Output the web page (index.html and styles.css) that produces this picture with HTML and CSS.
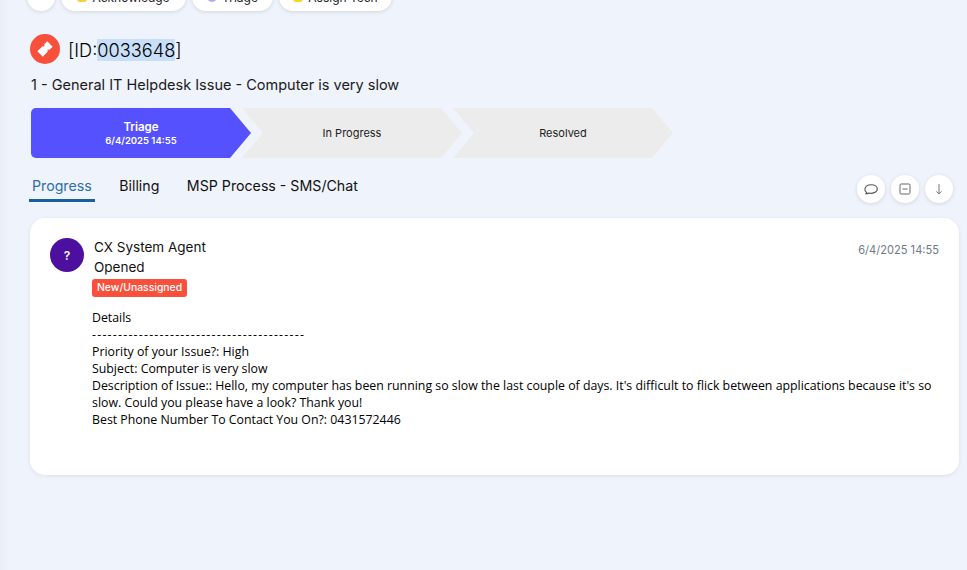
FILE: index.html
```html
<!DOCTYPE html>
<html lang="en">
<head>
  <meta charset="UTF-8" />
  <title>Ticket 0033648</title>
  <link rel="stylesheet" href="styles.css">
</head>
<body>
  <div class="toolbar">
    <button class="tool-round">
      <svg width="12" height="12" viewBox="0 0 12 12"><path d="M2 6h8M6 2v8" stroke="#666" fill="none"/></svg>
    </button>
    <button class="tool-pill pill-ack"><span class="dot dot-yellow"></span>Acknowledge</button>
    <button class="tool-pill pill-triage"><span class="dot dot-purple"></span>Triage</button>
    <button class="tool-pill pill-assign"><span class="dot dot-gold"></span>Assign Tech</button>
  </div>

  <div class="ticket-head">
    <span class="ticket-icon">
      <svg width="18" height="18" viewBox="0 0 18 18"><path transform="rotate(-45 9 9)" d="M2 5.200h7.200a1.200 1.200 0 0 0 2.400 0H16v7.600h-4.400a1.200 1.200 0 0 0-2.400 0H2z" fill="#fff"/></svg>
    </span>
    <h1 class="ticket-id">[ID:<span class="selected">0033648</span>]</h1>
  </div>
  <p class="ticket-title">1 - General IT Helpdesk Issue - Computer is very slow</p>

  <div class="stages">
    <div class="stage stage-first stage-active">
      <strong>Triage</strong>
      <small>6/4/2025 14:55</small>
    </div>
    <div class="stage">In Progress</div>
    <div class="stage">Resolved</div>
  </div>

  <div class="tabs-row">
    <nav class="tabs">
      <a class="tab tab-active">Progress</a>
      <a class="tab">Billing</a>
      <a class="tab">MSP Process - SMS/Chat</a>
    </nav>
    <div class="tab-actions">
      <button class="tool-circle">
        <svg width="16" height="16" viewBox="0 0 14 14" fill="none" stroke="#555" stroke-width="1"><path d="M3.200 10.200C2 9.300 1.500 8.200 1.700 7 2 4.900 4.300 3.300 7.300 3.300c3 0 5.200 1.600 5.200 3.700s-2.300 3.800-5.300 3.800c-.7 0-1.400-.1-2-.3-.8.500-1.600.7-2.600.7z"/></svg>
      </button>
      <button class="tool-circle">
        <svg width="14" height="14" viewBox="0 0 14 14" fill="none" stroke="#666" stroke-width="1"><rect x="2" y="2" width="10" height="10" rx="1.200"/><path d="M4.500 7h5"/></svg>
      </button>
      <button class="tool-circle">
        <svg width="14" height="14" viewBox="0 0 14 14" fill="none" stroke="#777" stroke-width="1"><path d="M7 2v10M4.400 9.400L7 12l2.600-2.600"/></svg>
      </button>
    </div>
  </div>

  <section class="card">
    <div class="avatar">?</div>
    <div class="entry">
      <div class="entry-top">
        <div class="entry-name">CX System Agent</div>
        <div class="entry-time">6/4/2025 14:55</div>
      </div>
      <div class="entry-action">Opened</div>
      <span class="badge">New/Unassigned</span>
      <div class="entry-body">
        Details<br>
        <span class="dashes">-----------------------------------------</span><br>
        Priority of your Issue?: High<br>
        Subject: Computer is very slow<br>
        Description of Issue:: Hello, my computer has been running so slow the last couple of days. It's difficult to flick between applications because it's so slow. Could you please have a look? Thank you!<br>
        Best Phone Number To Contact You On?: 0431572446
      </div>
    </div>
  </section>
</body>
</html>
```

FILE: styles.css
```css
* {
  box-sizing: border-box;
}

html, body {
  height: 570px;
  overflow: hidden;
}

body {
  margin: 0;
  padding: 0 8px 0 30px;
  background: linear-gradient(to right, #eaeef6, #eff3fb 10px);
  font-family: Inter, "Liberation Sans", sans-serif;
  color: #111;
}

button {
  font-family: inherit;
  border: none;
  background: #fff;
  box-shadow: 0 1px 4px rgba(0,0,0,0.12);
}

.toolbar {
  display: flex;
  gap: 6px;
  height: 11px;
  margin-left: -3px;
  align-items: flex-end;
}

.tool-round {
  flex: none;
  width: 28px;
  height: 28px;
  border-radius: 50%;
  padding: 0;
}

.tool-pill {
  flex: none;
  height: 28px;
  padding: 0 14px;
  border-radius: 14px;
  font-size: 12px;
  color: #222;
  display: flex;
  align-items: center;
  justify-content: center;
  gap: 5px;
}

.pill-ack { width: 125px; }
.pill-triage { width: 81px; }
.pill-assign { width: 113px; }

.dot {
  width: 10px;
  height: 10px;
  border-radius: 3px;
}

.dot-yellow { background: #f7cf3d; }
.dot-purple { background: #b9a5f2; border-radius: 50%; }
.dot-gold { background: #f9d423; }

.ticket-head {
  display: flex;
  align-items: center;
  gap: 8px;
  margin-top: 23px;
  height: 30px;
}

.ticket-icon {
  width: 30px;
  height: 30px;
  border-radius: 50%;
  background: #f9503b;
  display: flex;
  align-items: center;
  justify-content: center;
}

.ticket-id {
  margin: 2px 0 0;
  font-size: 18.200px;
  font-weight: 300;
  line-height: 24px;
  color: #000;
}

.selected {
  background: #c7dff8;
}

.ticket-title {
  margin: 11px 0 0 1px;
  font-size: 14.500px;
  line-height: 20px;
  color: #1a1a1a;
}

.stages {
  display: flex;
  margin: 13px 0 0 1px;
}

.stage {
  width: 220px;
  height: 50px;
  margin-right: -9px;
  background: #ececec;
  clip-path: polygon(0 0, calc(100% - 21px) 0, 100% 50%, calc(100% - 21px) 100%, 0 100%, 21px 50%);
  display: flex;
  flex-direction: column;
  align-items: center;
  justify-content: center;
  font-size: 11px;
  color: #222;
}

.stage-first {
  clip-path: polygon(0 0, calc(100% - 21px) 0, 100% 50%, calc(100% - 21px) 100%, 0 100%);
  border-radius: 5px 0 0 5px;
}

.stage-active {
  background: #5551ff;
  color: #fff;
}

.stage strong {
  font-size: 11.500px;
  font-weight: 600;
  line-height: 14px;
}

.stage small {
  font-size: 9.500px;
  font-weight: 600;
  line-height: 13px;
}

.tabs-row {
  display: flex;
  justify-content: space-between;
  align-items: flex-start;
  height: 28px;
  margin-top: 18px;
}

.tabs {
  display: flex;
  gap: 21.500px;
  margin-left: -1px;
}

.tab {
  font-size: 14.200px;
  line-height: 20px;
  padding: 0 3px 3px;
  color: #111;
}

.tab-active {
  color: #2b6ea8;
  border-bottom: 3px solid #1a5fa0;
}

.tab-actions {
  display: flex;
  gap: 6px;
  margin: -1px 6px 0 0;
}

.tool-circle {
  width: 28px;
  height: 28px;
  border-radius: 50%;
  padding: 0;
  display: flex;
  align-items: center;
  justify-content: center;
}

.card {
  display: flex;
  gap: 9px;
  height: 257px;
  margin-top: 14px;
  padding: 20px 20px 0;
  background: #fff;
  border-radius: 15px;
  box-shadow: 0 1px 4px rgba(0,0,0,0.08);
}

.avatar {
  flex: none;
  width: 34px;
  height: 34px;
  border-radius: 50%;
  background: #4c0f9e;
  color: #fff;
  font-size: 12px;
  font-weight: 600;
  display: flex;
  align-items: center;
  justify-content: center;
}

.entry {
  flex: 1;
  margin-top: -1px;
}

.entry-top {
  display: flex;
  justify-content: space-between;
  align-items: center;
  padding-left: 1px;
}

.entry-name {
  font-size: 13.500px;
  line-height: 20px;
}

.entry-time {
  font-size: 11.100px;
  color: #6f7a86;
  margin-top: 6px;
}

.entry-action {
  font-size: 13.500px;
  line-height: 20px;
  padding-left: 1px;
}

.badge {
  display: block;
  width: max-content;
  background: #f9503b;
  color: #fff;
  font-size: 10.400px;
  font-weight: 500;
  line-height: 18px;
  padding: 0 5px;
  border-radius: 3px;
  margin: 2px 0 0 -1px;
}

.entry-body {
  margin-top: 12px;
  margin-left: -1px;
  font-family: "Open Sans", "Noto Sans", sans-serif;
  font-size: 12.340px;
  line-height: 17px;
  color: #000;
}

.dashes {
  letter-spacing: 1.230px;
}
```
